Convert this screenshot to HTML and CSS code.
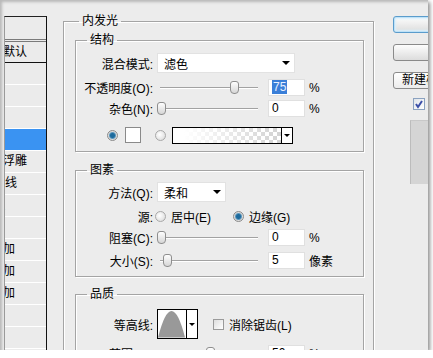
FILE: index.html
```html
<!DOCTYPE html>
<html>
<head>
<meta charset="utf-8">
<link rel="stylesheet" href="styles.css">
</head>
<body>
<div class="frame">

  <div class="styles-list">
    <div class="styles-inner">
      <div class="item title">样式</div>
      <div class="item blend">混合选项:默认</div>
      <div class="item">投影</div>
      <div class="item">内阴影</div>
      <div class="item">外发光</div>
      <div class="item selected">内发光</div>
      <div class="item">斜面和浮雕</div>
      <div class="item sub">等高线</div>
      <div class="item sub">纹理</div>
      <div class="item">光泽</div>
      <div class="item">颜色叠加</div>
      <div class="item">渐变叠加</div>
      <div class="item">图案叠加</div>
      <div class="item">描边</div>
      <div class="item"></div>
    </div>
  </div>

  <fieldset class="group outer">
    <legend>内发光</legend>

    <fieldset class="group section structure">
      <legend>结构</legend>
      <div class="row r-mode">
        <span class="label">混合模式:</span>
        <div class="select wide"><span>滤色</span><i class="arrow"></i></div>
      </div>
      <div class="row r-opacity">
        <span class="label">不透明度(O):</span>
        <div class="slider" style="--p:.75"><span class="thumb"></span></div>
        <div class="num"><span class="sel">75</span></div>
        <span class="unit">%</span>
      </div>
      <div class="row r-noise">
        <span class="label">杂色(N):</span>
        <div class="slider" style="--p:0"><span class="thumb"></span></div>
        <div class="num">0</div>
        <span class="unit">%</span>
      </div>
      <div class="row r-color">
        <span class="radio on"></span>
        <span class="swatch"></span>
        <span class="radio"></span>
        <div class="gradient"><span class="fill"></span><span class="drop"><i class="arrow"></i></span></div>
      </div>
    </fieldset>

    <fieldset class="group section elements">
      <legend>图素</legend>
      <div class="row r-method">
        <span class="label">方法(Q):</span>
        <div class="select narrow"><span>柔和</span><i class="arrow"></i></div>
      </div>
      <div class="row r-source">
        <span class="label">源:</span>
        <span class="radio"></span><span class="opt">居中(E)</span>
        <span class="radio on"></span><span class="opt">边缘(G)</span>
      </div>
      <div class="row r-choke">
        <span class="label">阻塞(C):</span>
        <div class="slider" style="--p:0"><span class="thumb"></span></div>
        <div class="num">0</div>
        <span class="unit">%</span>
      </div>
      <div class="row r-size">
        <span class="label">大小(S):</span>
        <div class="slider" style="--p:.06"><span class="thumb"></span></div>
        <div class="num">5</div>
        <span class="unit">像素</span>
      </div>
    </fieldset>

    <fieldset class="group section quality">
      <legend>品质</legend>
      <div class="row r-contour">
        <span class="label">等高线:</span>
        <div class="contour">
          <svg class="curve" width="29" height="28" viewBox="0 0 29 28">
            <path d="M0 28 Q14 -27 28 28 Z" fill="#999"/>
          </svg>
          <span class="drop"><i class="arrow"></i></span>
        </div>
        <span class="check"></span><span class="opt">消除锯齿(L)</span>
      </div>
      <div class="row r-range">
        <span class="label">范围(R):</span>
        <div class="slider" style="--p:.5"><span class="thumb"></span></div>
        <div class="num">50</div>
        <span class="unit">%</span>
      </div>
    </fieldset>
  </fieldset>

  <div class="side">
    <div class="btn default">确定</div>
    <div class="btn">取消</div>
    <div class="btn new">新建样式(W)...</div>
    <div class="preview-check">
      <span class="tick">
        <svg width="10" height="10" viewBox="0 0 10 10"><path d="M2 5 L4 8 L8 2" stroke="#3b4fa8" stroke-width="2" fill="none"/></svg>
      </span>
      <span class="opt">预览(V)</span>
    </div>
    <div class="preview"></div>
  </div>

</div>
</body>
</html>
```

FILE: styles.css
```css
body {
    margin: 0;
    background: #fff;
    font-family: "Liberation Sans", "Noto Sans CJK SC", sans-serif;
    font-size: 12px;
    color: #000;
}

.frame {
    width: 428px;
    height: 350px;
    box-sizing: border-box;
    padding: 4px 0 0 4px;
    background: #ececec;
    display: flex;
    align-items: flex-start;
    overflow: hidden;
    box-shadow: inset 4px 4px 3px -2px rgba(0,0,0,.22), 2px 2px 4px rgba(0,0,0,.45);
}

/* style list on the left, only its right end shows */
.styles-list {
    flex-shrink: 0;
    width: 41px;
    height: 340px;
    margin-top: 12px;
    border-top: 1px solid #222;
    border-right: 1px solid #111;
    border-left: 1px solid #9a9a9a;
    overflow: hidden;
}

.styles-inner {
    width: 120px;
    margin-left: -79px;
}

.item {
    height: 21px;
    line-height: 21px;
    padding-left: 41px;
    border-bottom: 1px solid #fff;
    background: #ebebeb;
    white-space: nowrap;
}

.item.title {
    height: 22px;
    border-bottom: 3px double #7a7a7a;
}

.item.blend {
    height: 20px;
    line-height: 20px;
    padding-left: 0;
    text-align: right;
    padding-right: 19px;
    border-bottom: 1px solid #111;
}

.item.sub {
    padding-left: 55px;
}

.item.selected {
    background: #3a93f2;
    color: #fff;
}

/* group boxes */
.group {
    margin: 0;
    padding: 0;
    min-width: 0;
    border: 1px solid #a4a4a4;
    box-shadow: 1px 1px 0 #fff, inset 1px 1px 0 #fff;
}

.group legend {
    padding: 0 3px;
    margin-left: 11px;
    line-height: 14px;
}

.outer {
    flex-shrink: 0;
    box-sizing: border-box;
    width: 311px;
    height: 345px;
    margin: 10px 0 0 16px;
}

.outer > legend {
    margin-left: 15px;
}

.section {
    margin: 5px 9px 0 11px;
}

.structure {
    padding: 6px 0 8px;
}

.elements {
    margin-top: 11px;
    padding: 5px 0 7px;
}

.quality {
    margin-top: 10px;
    padding: 8px 0 20px;
}

.row {
    display: flex;
    align-items: center;
    white-space: nowrap;
}

.label {
    width: 77px;
    flex-shrink: 0;
    text-align: right;
    margin-right: 4px;
}

.r-mode { height: 20px; margin-bottom: 6px; }
.r-opacity { height: 17px; margin-bottom: 4px; }
.r-noise { height: 17px; margin-bottom: 10px; }
.r-color { height: 16px; padding-left: 31px; }

.r-method { height: 20px; margin-bottom: 5px; }
.r-source { height: 18px; margin-bottom: 4px; }
.r-choke { height: 17px; margin-bottom: 6px; }
.r-size { height: 17px; }

.r-contour { height: 30px; margin-bottom: 6px; }
.r-range { height: 17px; }

/* dropdowns */
.select {
    height: 20px;
    box-sizing: border-box;
    display: flex;
    align-items: center;
    justify-content: space-between;
    padding: 0 4px 0 6px;
    background: #fff;
    border: 1px solid #e2e2e2;
}

.select.wide { width: 138px; }
.select.narrow { width: 69px; }

.arrow {
    width: 0;
    height: 0;
    border-left: 4px solid transparent;
    border-right: 4px solid transparent;
    border-top: 4px solid #000;
}

.drop .arrow {
    border-left-width: 3px;
    border-right-width: 3px;
    border-top-width: 3px;
}

/* sliders */
.slider {
    position: relative;
    flex-shrink: 0;
    width: 105px;
    height: 13px;
    margin-right: 6px;
}

.slider::before {
    content: "";
    position: absolute;
    left: 3px;
    right: 4px;
    top: 6px;
    height: 1px;
    background: #a2a2a2;
    box-shadow: 0 1px 0 #fff;
}

.thumb {
    position: absolute;
    top: 0;
    left: calc(var(--p) * 97px);
    width: 7px;
    height: 11px;
    border: 1px solid #8e8e8e;
    border-radius: 3px 3px 4px 4px;
    background: linear-gradient(#fefefe, #d6d6d6);
}

.num {
    width: 37px;
    height: 17px;
    box-sizing: border-box;
    padding-left: 3px;
    line-height: 15px;
    background: #fff;
    border: 1px solid #e0e0e0;
}

.num .sel {
    background: #3a7fd8;
    color: #e8f0ff;
    padding: 0 1px;
}

.unit {
    margin-left: 4px;
}

/* radios, swatch, gradient */
.radio {
    width: 11px;
    height: 11px;
    box-sizing: border-box;
    border-radius: 50%;
    border: 1px solid #a8a8a8;
    background: radial-gradient(circle at 40% 40%, #fff, #d6d6d6);
}

.radio.on {
    border-color: #8a8a8a;
    background: radial-gradient(circle, #1d6a9c 0 2px, #5c97bd 3px, #dcdcdc 4px);
}

.r-color .radio.on { margin-right: 7px; }
.r-color .radio { margin-right: 6px; }

.swatch {
    width: 16px;
    height: 16px;
    box-sizing: border-box;
    border: 1px solid #8a8a8a;
    background: #fff;
    margin-right: 14px;
}

.gradient {
    width: 121px;
    height: 17px;
    box-sizing: border-box;
    display: flex;
    border: 1px solid #000;
}

.gradient .fill {
    flex: 1;
    background-image:
        linear-gradient(to right, #fff 10%, rgba(255,255,255,0)),
        conic-gradient(#d2d2d2 25%, #fff 0 50%, #d2d2d2 0 75%, #fff 0);
    background-size: auto, 8px 8px;
}

.drop {
    width: 10px;
    display: flex;
    align-items: center;
    justify-content: center;
    border-left: 1px solid #000;
    background: #fff;
}

.opt {
    margin-left: 5px;
}

.r-source .radio { margin-left: -2px; }
.r-source .opt { margin-right: 24px; }

/* contour */
.contour {
    width: 41px;
    height: 30px;
    box-sizing: border-box;
    display: flex;
    border: 1px solid #000;
    background: #fff;
    margin-right: 15px;
}

.curve {
    display: block;
    flex: 1;
}

.check {
    width: 11px;
    height: 11px;
    box-sizing: border-box;
    border: 1px solid #9a9a9a;
    background: linear-gradient(135deg, #dedede, #fff);
}

/* right column */
.side {
    flex-shrink: 0;
    width: 100px;
    margin: 12px 0 0 19px;
    display: flex;
    flex-direction: column;
}

.btn {
    height: 17px;
    box-sizing: border-box;
    margin-bottom: 11px;
    line-height: 15px;
    text-align: center;
    border: 1px solid #8a8a8a;
    border-radius: 3px;
    background: linear-gradient(#fdfdfd, #dcdcdc);
}

.btn.default {
    border-color: #5a9ccc;
    box-shadow: inset 0 0 0 1px #bfe2f7, inset 0 0 2px 2px #d9effc;
}

.btn.new {
    text-align: left;
    padding-left: 8px;
    background: linear-gradient(#fff, #ececec);
}

.preview-check {
    display: flex;
    align-items: center;
    margin: -2px 0 0 20px;
    height: 12px;
}

.tick {
    width: 12px;
    height: 12px;
    box-sizing: border-box;
    display: flex;
    align-items: center;
    justify-content: center;
    border: 1px solid #8ba2c0;
    background: linear-gradient(135deg, #dfe4ea, #fff);
}

.preview {
    width: 60px;
    height: 63px;
    margin: 10px 0 0 17px;
    background: #d5d5d5;
    border-left: 1px solid #bcbcbc;
    border-top: 1px solid #c8c8c8;
}
```
